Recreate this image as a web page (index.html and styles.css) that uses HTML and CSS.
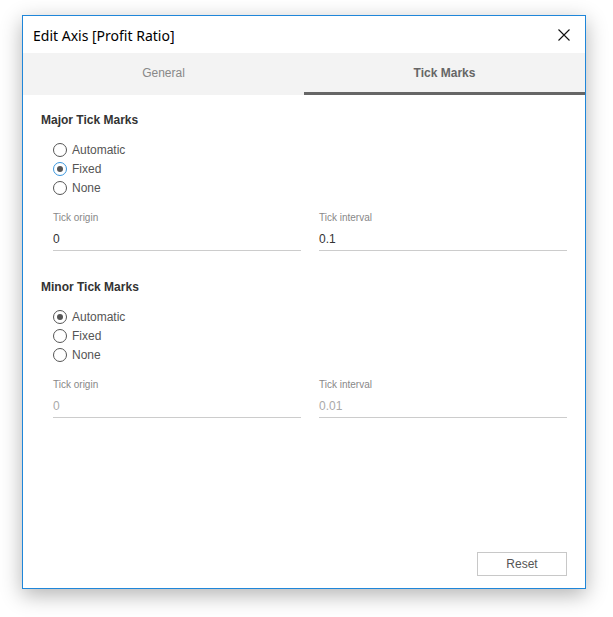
FILE: index.html
```html
<!DOCTYPE html>
<html>
<head>
<meta charset="utf-8">
<link rel="stylesheet" href="styles.css">
</head>
<body>
<div class="dialog">
  <div class="titlebar">
    <span class="title">Edit Axis [Profit Ratio]</span>
    <span class="close">
      <svg width="12" height="12" viewBox="0 0 12 12"><path d="M0.5 0.5 L11.5 11.5 M11.5 0.5 L0.5 11.5" stroke="#111" stroke-width="1.1" fill="none"/></svg>
    </span>
  </div>
  <div class="tabs">
    <div class="tab">General</div>
    <div class="tab active">Tick Marks</div>
  </div>
  <div class="content">
    <div class="section">
      <div class="heading">Major Tick Marks</div>
      <div class="radios">
        <div class="radio"><span class="circle"></span><span class="rlabel">Automatic</span></div>
        <div class="radio"><span class="circle checked focus"></span><span class="rlabel">Fixed</span></div>
        <div class="radio"><span class="circle"></span><span class="rlabel">None</span></div>
      </div>
      <div class="fields">
        <div class="field"><div class="flabel">Tick origin</div><div class="input">0</div></div>
        <div class="field"><div class="flabel">Tick interval</div><div class="input">0.1</div></div>
      </div>
    </div>
    <div class="section minor">
      <div class="heading">Minor Tick Marks</div>
      <div class="radios">
        <div class="radio"><span class="circle checked"></span><span class="rlabel">Automatic</span></div>
        <div class="radio"><span class="circle"></span><span class="rlabel">Fixed</span></div>
        <div class="radio"><span class="circle"></span><span class="rlabel">None</span></div>
      </div>
      <div class="fields">
        <div class="field"><div class="flabel">Tick origin</div><div class="input disabled">0</div></div>
        <div class="field"><div class="flabel">Tick interval</div><div class="input disabled">0.01</div></div>
      </div>
    </div>
  </div>
  <div class="footer">
    <button class="reset">Reset</button>
  </div>
</div>
</body>
</html>
```
FILE: styles.css
```css
html, body {
  margin: 0;
  padding: 0;
  background: #ffffff;
}
body {
  box-sizing: border-box;
  min-height: 617px;
  padding: 15px 0 0 22px;
  font-family: "Liberation Sans", Arial, sans-serif;
}
.dialog {
  box-sizing: border-box;
  width: 564px;
  height: 574px;
  border: 1px solid #1f86d9;
  background: #fff;
  box-shadow: 0 6px 20px rgba(0,0,0,0.3);
  display: flex;
  flex-direction: column;
}
.titlebar {
  height: 37px;
  display: flex;
  align-items: center;
  justify-content: space-between;
  padding: 0 15px 0 10px;
}
.title {
  font-family: "Noto Sans", sans-serif;
  font-size: 14px;
  color: #000;
  margin-top: 1px;
}
.close {
  display: flex;
  width: 12px;
  height: 12px;
  margin-top: 1px;
}
.tabs {
  display: flex;
  height: 42px;
  background: #f3f3f3;
}
.tab {
  flex: 1;
  box-sizing: border-box;
  display: flex;
  align-items: center;
  justify-content: center;
  font-size: 12px;
  color: #888;
  padding-bottom: 2px;
}
.tab.active {
  font-weight: bold;
  color: #666;
  border-bottom: 3px solid #666;
  padding-bottom: 0;
}
.content {
  flex: 1;
  padding: 17px 18px 0 18px;
}
.section.minor {
  margin-top: 28px;
}
.heading {
  font-size: 12px;
  font-weight: bold;
  color: #333;
  line-height: 16px;
}
.radios {
  margin-top: 12px;
  padding-left: 12px;
}
.radio {
  height: 19px;
  display: flex;
  align-items: center;
}
.circle {
  box-sizing: border-box;
  width: 14px;
  height: 14px;
  border: 1px solid #555;
  border-radius: 50%;
  display: flex;
  align-items: center;
  justify-content: center;
  margin-right: 5px;
}
.circle.checked::after {
  content: "";
  width: 6px;
  height: 6px;
  border-radius: 50%;
  background: #555;
}
.circle.focus {
  border-color: #3a96dd;
}
.rlabel {
  font-size: 12px;
  color: #555;
}
.fields {
  display: grid;
  grid-template-columns: 1fr 1fr;
  column-gap: 18px;
  padding-left: 12px;
  margin-top: 14px;
}
.flabel {
  font-size: 10px;
  line-height: 14px;
  color: #888;
}
.input {
  margin-top: 4px;
  height: 21px;
  line-height: 21px;
  border-bottom: 1px solid #ccc;
  font-size: 12px;
  color: #333;
}
.input.disabled {
  color: #aaa;
}
.footer {
  display: flex;
  justify-content: flex-end;
  padding: 0 18px 12px 0;
}
.reset {
  width: 90px;
  height: 24px;
  border: 1px solid #c8c8c8;
  background: #fff;
  font-family: "Liberation Sans", Arial, sans-serif;
  font-size: 12px;
  color: #555;
  padding: 0;
}
```
